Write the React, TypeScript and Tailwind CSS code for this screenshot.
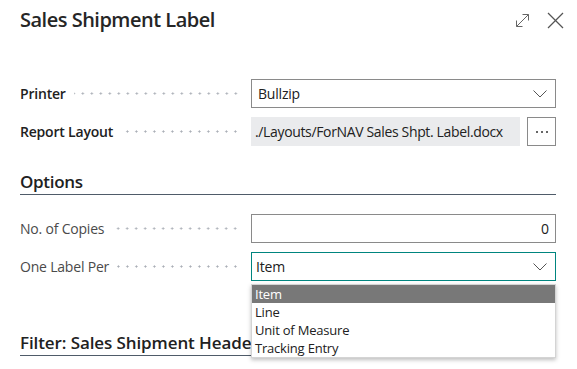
import { ReactNode } from "react";

const LEADER =
  "flex-1 h-[3px] mx-[8px] bg-[radial-gradient(circle,#a8adb5_0.9px,transparent_1.2px)] bg-[length:9px_3px] bg-repeat-x bg-right";

function Chevron() {
  return (
    <svg width="14" height="8" viewBox="0 0 14 8" className="shrink-0">
      <polyline points="0.5,0.5 7,7 13.5,0.5" fill="none" stroke="#555" strokeWidth="1" />
    </svg>
  );
}

function Row({ label, strong, children }: { label: string; strong?: boolean; children: ReactNode }) {
  return (
    <div className="flex items-center h-[29px]">
      <div className="w-[231px] flex items-center pr-[3px]">
        <span
          className={
            strong
              ? "text-[14px] font-semibold tracking-[-0.2px] text-[#212121]"
              : "text-[14px] tracking-[-0.2px] text-[#4a4a4a]"
          }
        >
          {label}
        </span>
        <span className={LEADER} />
      </div>
      <div className="flex-1 h-full relative">{children}</div>
    </div>
  );
}

const OPTIONS = ["Item", "Line", "Unit of Measure", "Tracking Entry"];

export default function App() {
  return (
    <div className="w-[577px] h-[369px] bg-white overflow-hidden font-['Segoe_UI','Open_Sans',sans-serif] text-[#212121]">
      <div className="flex items-start justify-between pl-5 pr-[13px] pt-[6px] h-[79px]">
        <h1 className="text-[20px] leading-[28px] font-semibold tracking-[-0.5px] text-[#262626]">Sales Shipment Label</h1>
        <div className="flex items-center gap-[17px] pt-[6px]">
          <svg width="15" height="15" viewBox="0 0 15 15">
            <g fill="none" stroke="#666" strokeWidth="1">
              <line x1="1.5" y1="13.5" x2="13.5" y2="1.5" />
              <polyline points="7.5,1.5 13.5,1.5 13.5,7.5" />
              <polyline points="1.5,7.5 1.5,13.5 7.5,13.5" />
            </g>
          </svg>
          <svg width="17" height="17" viewBox="0 0 17 17">
            <g stroke="#555" strokeWidth="1.3">
              <line x1="1" y1="1" x2="16" y2="16" />
              <line x1="16" y1="1" x2="1" y2="16" />
            </g>
          </svg>
        </div>
      </div>

      <div className="pl-5 pr-[21px]">
        <div className="flex flex-col gap-[9px]">
          <Row label="Printer" strong>
            <div className="h-full border border-[#8a8a8a] flex items-center justify-between pl-[6px] pr-[8px] text-[14px] tracking-[-0.2px]">
              <span>Bullzip</span>
              <Chevron />
            </div>
          </Row>
          <Row label="Report Layout" strong>
            <div className="h-full flex gap-[7px]">
              <div className="flex-1 bg-[#eaebed] flex items-center pl-[4px] text-[14px] tracking-[-0.35px]">
                ./Layouts/ForNAV Sales Shpt. Label.docx
              </div>
              <div className="w-[29px] h-full border border-[#8a8a8a] flex items-center justify-center gap-[3px]">
                <span className="w-[2px] h-[2px] rounded-full bg-[#333]" />
                <span className="w-[2px] h-[2px] rounded-full bg-[#333]" />
                <span className="w-[2px] h-[2px] rounded-full bg-[#333]" />
              </div>
            </div>
          </Row>
        </div>

        <h2 className="mt-[24px] text-[17px] leading-[24px] font-semibold tracking-[-0.3px] border-b border-[#4f5b69]">Options</h2>

        <div className="mt-[19px] flex flex-col gap-[9px]">
          <Row label="No. of Copies">
            <div className="h-full border border-[#8a8a8a] flex items-center justify-end pr-[6px] text-[14px]">0</div>
          </Row>
          <Row label="One Label Per">
            <div className="h-full border border-[#00857f] flex items-center justify-between pl-[4px] pr-[8px] text-[14px] tracking-[-0.2px]">
              <span>Item</span>
              <Chevron />
            </div>
            <div className="absolute left-0 right-0 top-[32px] z-10 bg-white border border-[#d4d4d4] shadow-[0_2px_4px_rgba(0,0,0,0.25)] text-[13px] tracking-[-0.2px]">
              {OPTIONS.map((o, i) => (
                <div
                  key={o}
                  className={
                    i === 0
                      ? "h-[18px] leading-[18px] pl-[3px] bg-[#787878] text-white"
                      : "h-[18px] leading-[18px] pl-[3px] text-[#212121]"
                  }
                >
                  {o}
                </div>
              ))}
            </div>
          </Row>
        </div>

        <h2 className="mt-[50px] text-[17px] leading-[24px] font-semibold tracking-[-0.1px] border-b border-[#4f5b69] whitespace-nowrap">
          Filter: Sales Shipment Header
        </h2>
      </div>
    </div>
  );
}
